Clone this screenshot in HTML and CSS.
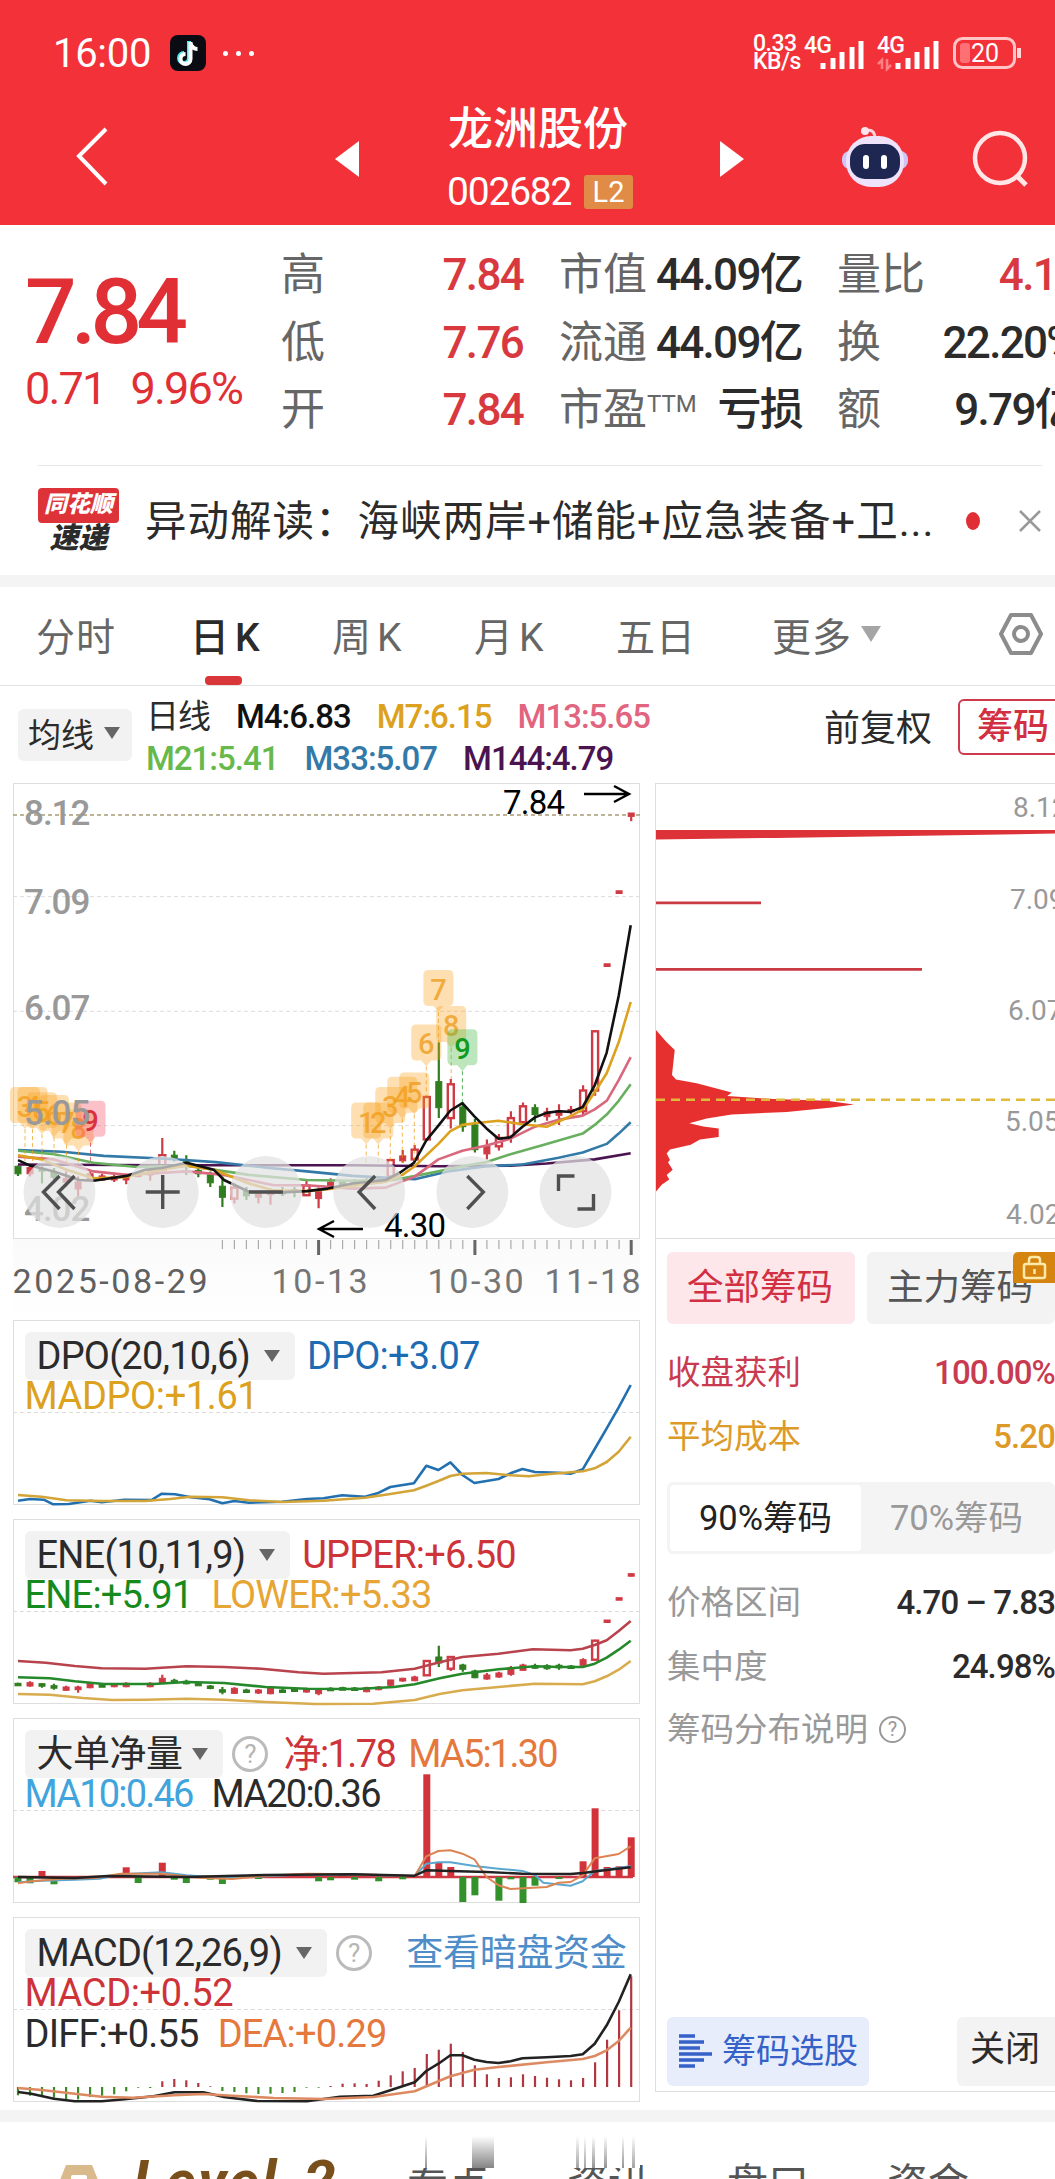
FILE: index.html
```html
<!DOCTYPE html>
<html lang="zh-CN">
<head>
  <meta charset="UTF-8">
  <meta name="viewport" content="width=device-width, initial-scale=1.0">
  <title>龙洲股份 002682</title>
  <link rel="stylesheet" href="styles.css">
</head>
<body>
  <header class="header">
    <div class="status-bar">
      <span class="clock">16:00</span>
      <svg class="app-icon" width="36" height="36" viewBox="0 0 36 36">
        <rect width="36" height="36" rx="8" fill="#0b0b14"/>
        <path d="M19 6v17a5 5 0 1 1-5-5" fill="none" stroke="#4de8f0" stroke-width="4"/>
        <path d="M20.500 7v17a5 5 0 1 1-5-5M20.500 8c1 4 4 6 7 6" fill="none" stroke="#fff" stroke-width="4"/>
      </svg>
      <span class="more-dots"><i></i><i></i><i></i></span>
      <div class="signals">
        <span class="speed">0.33<br>KB/s</span>
        <svg width="60" height="38" viewBox="0 0 60 38">
          <text x="0" y="19" class="net">4G</text>
          <path d="M19 35v-6M29 35v-11M38 35v-17M48 35v-22M57 35v-28" stroke="#fff" stroke-width="5"/>
        </svg>
        <svg width="62" height="38" viewBox="0 0 62 38">
          <text x="1" y="19" class="net">4G</text>
          <path d="M6 35v-9l-4 4M11 25v10l4-4" stroke="#ff8084" stroke-width="2.500" fill="none"/>
          <path d="M22 35v-6M32 35v-11M41 35v-17M51 35v-22M60 35v-28" stroke="#fff" stroke-width="5"/>
        </svg>
        <svg class="battery" width="70" height="32" viewBox="0 0 70 32">
          <rect x="1.500" y="1.500" width="60" height="29" rx="8" fill="none" stroke="#ffc4c6" stroke-width="3"/>
          <rect x="7" y="6" width="10" height="20" rx="3" fill="#ff7074"/>
          <path d="M66 11v10" stroke="#ffd8d9" stroke-width="4"/>
          <text x="18" y="25" class="battery-text">20</text>
        </svg>
      </div>
    </div>
    <div class="title-bar">
      <svg class="back" width="34" height="60" viewBox="0 0 34 60"><path d="M31 2 4 29l27 28" fill="none" stroke="#fff" stroke-width="4"/></svg>
      <svg class="prev" width="24" height="36" viewBox="0 0 24 36"><path d="M24 0v36L0 18z" fill="#fff"/></svg>
      <div class="stock">
        <h1>龙洲股份</h1>
        <div class="code-row"><span class="code">002682</span><span class="level">L2</span></div>
      </div>
      <svg class="next" width="24" height="36" viewBox="0 0 24 36"><path d="M0 0v36l24-18z" fill="#fff"/></svg>
      <svg class="robot" width="68" height="64" viewBox="0 0 68 64">
        <path d="M24 5c6-2 10 0 10 8" fill="none" stroke="#fbd3df" stroke-width="3"/>
        <circle cx="24" cy="5" r="4" fill="#fde4ee"/>
        <rect x="1" y="25" width="66" height="18" rx="8" fill="#cfc6f5"/>
        <rect x="5" y="10" width="58" height="51" rx="25" fill="#efe2fb"/>
        <rect x="9" y="18" width="50" height="35" rx="15" fill="#1e2751"/>
        <path d="M25 32v8M43 32v8" stroke="#fff" stroke-width="6" stroke-linecap="round"/>
      </svg>
      <svg class="search" width="58" height="58" viewBox="0 0 58 58"><circle cx="28" cy="28" r="25" fill="none" stroke="#ffe6e7" stroke-width="4.500"/><path d="m45 46 9 9" stroke="#ffe6e7" stroke-width="5"/></svg>
    </div>
  </header>

  <section class="quote">
    <div class="price">
      <div class="last">7.84</div>
      <div class="change"><span>0.71</span><span>9.96%</span></div>
    </div>
    <dl class="stats col-a">
      <div><dt>高</dt><dd class="up">7.84</dd></div>
      <div><dt>低</dt><dd class="up">7.76</dd></div>
      <div><dt>开</dt><dd class="up">7.84</dd></div>
    </dl>
    <dl class="stats col-b">
      <div><dt>市值</dt><dd>44.09亿</dd></div>
      <div><dt>流通</dt><dd>44.09亿</dd></div>
      <div><dt>市盈<sup>TTM</sup></dt><dd>亏损</dd></div>
    </dl>
    <dl class="stats col-c">
      <div><dt>量比</dt><dd class="up ratio">4.1</dd></div>
      <div><dt>换</dt><dd>22.20%</dd></div>
      <div><dt>额</dt><dd>9.79亿</dd></div>
    </dl>
  </section>

  <section class="news">
    <div class="news-logo"><b>同花顺</b><em>速递</em></div>
    <p>异动解读：海峡两岸+储能+应急装备+卫...</p>
    <i class="red-dot"></i>
    <svg width="24" height="24" viewBox="0 0 24 24"><path d="m2 2 20 20M22 2 2 22" stroke="#999" stroke-width="2.500"/></svg>
  </section>

  <nav class="tabs">
    <a>分时</a>
    <a class="active">日<span>K</span></a>
    <a>周<span>K</span></a>
    <a>月<span>K</span></a>
    <a>五日</a>
    <a class="more">更多<i class="caret"></i></a>
    <svg width="46" height="44" viewBox="0 0 46 44"><path d="M13 3h20l10 19-10 19H13L3 22z" fill="none" stroke="#8c8c8c" stroke-width="4" stroke-linejoin="round"/><circle cx="23" cy="22" r="7" fill="none" stroke="#8c8c8c" stroke-width="4"/></svg>
  </nav>

  <section class="ma-bar">
    <span class="picker ma-picker">均线<i class="caret"></i></span>
    <div class="ma-list">
      <div class="ma-row"><b>日线</b><span class="c-black">M4:6.83</span><span class="c-gold">M7:6.15</span><span class="c-pink">M13:5.65</span></div>
      <div class="ma-row"><span class="c-green">M21:5.41</span><span class="c-blue">M33:5.07</span><span class="c-purple">M144:4.79</span></div>
    </div>
    <span class="adjust">前复权</span>
    <span class="chip-toggle">筹码</span>
  </section>

  <main class="board">
    <div class="charts">
      <div class="kline"><svg id="kline" width="627" height="456"></svg></div>
      <div class="dates">
        <svg id="ticks" width="627" height="16"></svg>
        <div class="date-row"><span>2025-08-29</span><span>10-13</span><span>10-30</span><span>11-18</span></div>
      </div>

      <div class="indicator">
        <svg id="dpo" width="627" height="185"></svg>
        <div class="legend">
          <div class="legend-row"><span class="picker">DPO(20,10,6)<i class="caret"></i></span><span class="c-dpo">DPO:+3.07</span></div>
          <div class="legend-row"><span class="c-gold">MADPO:+1.61</span></div>
        </div>
      </div>

      <div class="indicator">
        <svg id="ene" width="627" height="185"></svg>
        <div class="legend">
          <div class="legend-row"><span class="picker">ENE(10,11,9)<i class="caret"></i></span><span class="c-red">UPPER:+6.50</span></div>
          <div class="legend-row"><span class="c-deepgreen">ENE:+5.91</span><span class="c-amber">LOWER:+5.33</span></div>
        </div>
      </div>

      <div class="indicator">
        <svg id="flow" width="627" height="185"></svg>
        <div class="legend flow-legend">
          <div class="legend-row"><span class="picker cn">大单净量<i class="caret"></i></span><span class="help">?</span><span class="c-red net-val">净:1.78</span><span class="c-orange">MA5:1.30</span></div>
          <div class="legend-row"><span class="c-sky">MA10:0.46</span><span class="c-dark">MA20:0.36</span></div>
        </div>
      </div>

      <div class="indicator">
        <svg id="macd" width="627" height="185"></svg>
        <div class="legend">
          <div class="legend-row"><span class="picker">MACD(12,26,9)<i class="caret"></i></span><span class="help">?</span><a class="dark-link">查看暗盘资金</a></div>
          <div class="legend-row"><span class="c-red">MACD:+0.52</span></div>
          <div class="legend-row"><span class="c-dark">DIFF:+0.55</span><span class="c-orange">DEA:+0.29</span></div>
        </div>
      </div>
    </div>

    <aside class="chips">
      <svg id="chips" width="398" height="455"></svg>
      <div class="chip-tabs">
        <span class="on">全部筹码</span>
        <span>主力筹码
          <svg class="lock" width="42" height="31" viewBox="0 0 42 31"><path d="M6 0h36v31H0V6q0-6 6-6z" fill="#d5850f"/><rect x="11" y="12" width="21" height="14" rx="2" fill="none" stroke="#ffe9a8" stroke-width="2.500"/><path d="M16 12V8q0-3 3-3h5q3 0 3 3v4M21.500 17v5" fill="none" stroke="#ffe9a8" stroke-width="2.500"/></svg>
        </span>
      </div>
      <div class="chip-row profit"><span>收盘获利</span><b>100.00%</b></div>
      <div class="chip-row cost"><span>平均成本</span><b>5.20</b></div>
      <div class="segment"><span class="on">90%筹码</span><span>70%筹码</span></div>
      <div class="chip-row"><span>价格区间</span><b>4.70 – 7.83</b></div>
      <div class="chip-row"><span>集中度</span><b>24.98%</b></div>
      <div class="chip-row note"><span>筹码分布说明</span><span class="help small">?</span></div>
      <div class="chip-actions">
        <span class="pick"><svg width="34" height="34" viewBox="0 0 34 34"><path d="M0 2h16M0 8h25M0 14h21M0 20h33M0 26h25M0 32h16" stroke="#3561c9" stroke-width="3.600"/></svg>筹码选股</span>
        <span class="close">关闭</span>
      </div>
    </aside>
  </main>

  <footer class="bottom-tabs">
    <svg class="medal" width="42" height="30" viewBox="0 0 42 30"><path d="M8 0h26l8 20v10H0V20z" fill="#d9ba8c"/><rect x="13" y="10" width="16" height="5" rx="2" fill="#fff"/></svg>
    <span class="level2">Level-2</span>
    <span>看点</span>
    <span>资讯</span>
    <span>盘口</span>
    <span>资金</span>
    <div class="streaks"></div>
  </footer>

  <script src="charts.js"></script>
</body>
</html>
```
FILE: styles.css
```css
* {
  box-sizing: border-box;
}

body {
  margin: 0;
  width: 1055px;
  height: 2179px;
  overflow: hidden;
  background: #fff;
  color: #2b2b2b;
  font-family: Roboto, "Noto Sans CJK SC", sans-serif;
}

svg {
  display: block;
  flex: none;
  overflow: visible;
}

i {
  display: inline-block;
}

/* header */
.header {
  height: 225px;
  background: #f23138;
  color: #fff;
}

.status-bar {
  display: flex;
  align-items: center;
  height: 106px;
  padding: 0 32px 0 53px;
}

.clock {
  width: 117px;
  font-size: 40px;
  letter-spacing: -0.3px;
}

.more-dots {
  display: flex;
  gap: 8px;
  margin-left: 17px;
}

.more-dots i {
  width: 5px;
  height: 5px;
  border-radius: 50%;
  background: #fff;
}

.signals {
  display: flex;
  align-items: center;
  margin-left: auto;
}

.speed {
  width: 51px;
  font-size: 23px;
  font-weight: 500;
  line-height: 18px;
  letter-spacing: -0.5px;
  white-space: nowrap;
}

.net {
  font-size: 23px;
  font-weight: 500;
  letter-spacing: -0.8px;
  fill: #fff;
}

.signals svg + svg {
  margin-left: 12px;
}

.signals .battery {
  margin-left: 15px;
}

.battery-text {
  font-size: 25px;
  fill: #fff;
}

.title-bar {
  display: flex;
  height: 119px;
  padding-left: 75px;
}

.back {
  margin-top: 21px;
}

.prev {
  margin: 35px 0 0 226px;
}

.stock {
  width: 188px;
  margin-left: 89px;
}

.stock h1 {
  margin: 0;
  padding-top: 1px;
  font-size: 45px;
  font-weight: 500;
  line-height: 46px;
  white-space: nowrap;
}

.code-row {
  display: flex;
  align-items: center;
  margin: 21px 0 0 -1px;
}

.code {
  width: 137px;
  font-size: 39px;
  line-height: 36px;
  letter-spacing: -1.2px;
}

.level {
  width: 49px;
  height: 34px;
  border-radius: 3px;
  background: #e08c46;
  font-size: 29px;
  line-height: 35px;
  text-align: center;
}

.next {
  margin: 35px 0 0 84px;
}

.robot {
  margin: 20px 0 0 97px;
}

.search {
  margin: 24px 0 0 63px;
}

/* quote */
.quote {
  display: flex;
  height: 240px;
  padding: 17px 0 0 25px;
}

.price {
  flex: none;
  width: 256px;
  color: #e03036;
}

.last {
  height: 104px;
  margin-top: 18px;
  font-size: 91px;
  font-weight: 500;
  line-height: 104px;
  letter-spacing: -5.8px;
}

.change {
  display: flex;
  gap: 25px;
  font-size: 45px;
  line-height: 50px;
  letter-spacing: -1.8px;
}

.stats {
  flex: none;
  margin: 0;
}

.stats div {
  display: flex;
  justify-content: space-between;
  height: 67.5px;
  line-height: 67.5px;
  white-space: nowrap;
}

.stats dt {
  font-size: 44px;
  color: #666;
}

.stats sup {
  font-size: 24px;
  line-height: 0;
  vertical-align: 13px;
}

.stats dd {
  margin: 0;
  font-size: 44px;
  font-weight: 500;
  letter-spacing: -1.7px;
}

.stats .up {
  color: #d8393f;
}

.col-a {
  width: 242px;
}

.col-b {
  width: 243px;
  margin-left: 36px;
}

.col-c {
  width: 240px;
  margin-left: 35px;
}

.stats .ratio {
  padding-right: 21px;
}

/* news */
.news {
  display: flex;
  align-items: center;
  height: 110px;
  margin: 0 13px 0 38px;
  border-top: 1px solid #e8e8e8;
}

.news-logo {
  flex: none;
  width: 81px;
  margin-right: 26px;
  text-align: center;
  font-style: italic;
  line-height: 31px;
}

.news-logo b {
  display: block;
  height: 35px;
  padding-top: 1px;
  border-radius: 4px;
  background: #dc3238;
  color: #fff;
  font-size: 23px;
  font-weight: 900;
}

.news-logo em {
  display: block;
  font-size: 29px;
  font-weight: 900;
}

.news p {
  flex: none;
  width: 821px;
  margin: -6px 0 0;
  font-size: 41.5px;
  letter-spacing: 1px;
  white-space: nowrap;
}

.red-dot {
  width: 18px;
  height: 18px;
  margin-right: 38px;
  border-radius: 50%;
  background: #e03036;
}

/* tabs */
.tabs {
  display: flex;
  align-items: center;
  height: 111px;
  padding: 0 9px 5px 36px;
  border-top: 12px solid #f4f4f4;
  border-bottom: 1px solid #e2e2e2;
  font-size: 39px;
  color: #666;
}

.tabs a {
  position: relative;
  width: 142px;
  letter-spacing: 1px;
  white-space: nowrap;
}

.tabs a span {
  margin-left: 5px;
}

.tabs a:first-child {
  width: 154px;
}

.tabs .active {
  color: #2b2b2b;
  font-weight: 500;
}

.tabs .active::after {
  content: "";
  position: absolute;
  left: 15px;
  bottom: -23px;
  width: 37px;
  height: 9px;
  border-radius: 4px;
  background: #d9363a;
}

.tabs .more {
  display: flex;
  align-items: center;
  width: 110px;
  margin: 0 116px 0 14px;
}

.caret {
  border: 8px solid transparent;
  border-top: 12px solid #666;
  border-bottom: 0;
}

.tabs .caret {
  margin-left: 9px;
  border-width: 16px 10px 0;
  border-top-color: #a5a5a5;
}

/* moving averages */
.ma-bar {
  display: flex;
  height: 97px;
  padding-left: 18px;
}

.picker {
  display: flex;
  align-items: center;
  border-radius: 6px;
  background: #f2f2f2;
  color: #2b2b2b;
}

.ma-picker {
  flex: none;
  width: 114px;
  height: 52px;
  margin-top: 23px;
  padding: 0 0 4px 10px;
  font-size: 33px;
}

.ma-picker .caret {
  margin-left: 10px;
}

.ma-list {
  flex: none;
  width: 677px;
  padding: 10px 0 0 14px;
}

.ma-row {
  display: flex;
  gap: 26px;
  height: 42px;
  font-size: 33px;
  font-weight: 500;
  line-height: 42px;
  letter-spacing: -1px;
}

.ma-row b {
  font-weight: 400;
}

.adjust {
  flex: none;
  width: 149px;
  padding-left: 15px;
  font-size: 36px;
  line-height: 87px;
}

.chip-toggle {
  flex: none;
  width: 115px;
  height: 56px;
  margin-top: 13px;
  padding-left: 17px;
  border: 2px solid #cf3a4d;
  border-radius: 6px;
  color: #d22f43;
  font-size: 36px;
  font-weight: 500;
  line-height: 52px;
}

.c-black { color: #111; }
.c-gold { color: #dca11d; }
.c-pink { color: #e2657f; }
.c-green { color: #68b94c; }
.c-blue { color: #337aa8; }
.c-purple { color: #4b1450; }
.c-dpo { color: #1d6cb3; }
.c-red { color: #cd3339; }
.c-deepgreen { color: #168a1c; }
.c-amber { color: #e7a535; }
.c-orange { color: #e5783d; }
.c-sky { color: #41a4dc; }
.c-dark { color: #2b2b2b; }

/* charts */
.board {
  display: flex;
  height: 1327px;
  padding-left: 12.5px;
}

.charts {
  flex: none;
  width: 642.5px;
}

.kline {
  width: 627px;
  height: 456px;
}

.dates {
  width: 627px;
  height: 81px;
  background: linear-gradient(#fafafa, #fff);
}

.date-row {
  display: flex;
  padding-top: 6px;
  font-size: 34px;
  line-height: 40px;
  letter-spacing: 2.6px;
  color: #757575;
}

.date-row span {
  width: 117px;
  white-space: nowrap;
}

.date-row span:first-child {
  width: 259px;
  color: #606060;
}

.date-row span:nth-child(2) {
  width: 156px;
}

.date-row span:last-child {
  width: 95px;
}

.indicator {
  position: relative;
  width: 627px;
  height: 185px;
  margin-bottom: 14px;
}

.legend {
  position: absolute;
  inset: 12px 0 0 12px;
  font-size: 38px;
  letter-spacing: -0.8px;
}

.legend-row {
  display: flex;
  align-items: center;
  gap: 19px;
  height: 41px;
  line-height: 41px;
  white-space: nowrap;
}

.legend-row:first-child {
  gap: 12px;
  height: 48px;
  margin-bottom: -4px;
}

.legend-row:nth-child(2) > .c-gold,
.legend-row:nth-child(2) > .c-red {
  letter-spacing: -0.4px;
}

.legend-row .picker {
  height: 48px;
  padding: 0 15px 0 12px;
}

.legend-row .caret {
  margin-left: 14px;
}

.picker.cn {
  font-size: 37px;
  letter-spacing: -0.5px;
}

.picker.cn .caret {
  margin-left: 9px;
}

.flow-legend {
  letter-spacing: -1.8px;
}

.help {
  flex: none;
  width: 36px;
  height: 36px;
  margin-left: -3px;
  border: 3px solid #bbb;
  border-radius: 50%;
  color: #b5b5b5;
  font-size: 26px;
  line-height: 31px;
  text-align: center;
}

.net-val {
  margin: 0 1px 0 4px;
  letter-spacing: -1.6px;
}

.dark-link {
  margin-left: auto;
  padding-right: 13px;
  color: #4f8dc9;
  font-size: 37px;
  letter-spacing: -0.3px;
}

/* chip panel */
.chips {
  display: flex;
  flex-direction: column;
  flex: none;
  width: 400px;
  height: 1309px;
  border: 1px solid #dedede;
  border-right: 0;
  overflow: hidden;
}

.chip-tabs {
  display: flex;
  gap: 12px;
  padding: 13px 0 15px 11px;
}

.chip-tabs > span {
  position: relative;
  width: 188px;
  height: 72px;
  padding-left: 20px;
  border-radius: 6px;
  background: #f3f3f3;
  color: #555;
  font-size: 36.5px;
  line-height: 72px;
}

.chip-tabs .on {
  background: #fde7ea;
  color: #d22f43;
}

.lock {
  position: absolute;
  top: 0;
  right: 0;
}

.chip-row {
  display: flex;
  justify-content: space-between;
  height: 64px;
  padding-left: 11px;
  color: #999;
  font-size: 33.5px;
  line-height: 67px;
}

.chip-row b {
  color: #2b2b2b;
  font-size: 33px;
  font-weight: 500;
  letter-spacing: -0.9px;
}

.profit,
.chip-row.profit b {
  color: #c93a50;
}

.cost,
.chip-row.cost b {
  color: #dd9a28;
}

.segment {
  display: flex;
  height: 72px;
  margin: 15px 0 15px 11px;
  padding: 3px;
  border-radius: 6px;
  background: #f4f4f4;
  font-size: 34.5px;
  line-height: 67px;
  color: #999;
}

.segment span {
  width: 191px;
  text-align: center;
}

.segment .on {
  border-radius: 4px;
  background: #fff;
  color: #222;
}

.chip-row.note {
  justify-content: flex-start;
  align-items: center;
  gap: 11px;
}

.help.small {
  width: 27px;
  height: 27px;
  margin-left: 0;
  border-width: 2px;
  border-color: #999;
  color: #999;
  font-size: 20px;
  line-height: 23px;
}

.chip-actions {
  display: flex;
  justify-content: space-between;
  margin-top: auto;
  padding: 0 0 5px 11px;
  font-size: 34px;
  line-height: 66px;
}

.pick {
  display: flex;
  align-items: center;
  gap: 9px;
  width: 202px;
  height: 69px;
  padding: 0 0 2px 12px;
  border-radius: 6px;
  background: #e8edfb;
  color: #3561c9;
}

.close {
  width: 98px;
  height: 69px;
  padding-left: 13px;
  border-radius: 6px 0 0 6px;
  background: #f3f3f3;
  font-size: 35px;
}

/* chart text */
.axis { font-size: 35px; font-weight: 500; letter-spacing: -1px; fill: #999; }
.mark { font-size: 33px; letter-spacing: -0.8px; fill: #000; }
.chip-axis { font-size: 28px; fill: #999; }
.tag { font-size: 29px; font-weight: 500; text-anchor: middle; }

/* bottom tabs */
.bottom-tabs {
  position: relative;
  display: flex;
  height: 70px;
  padding: 32px 0 0 58px;
  border-top: 12px solid #f4f4f4;
  font-size: 41px;
  line-height: 60px;
  color: #555;
  overflow: hidden;
}

.bottom-tabs span {
  width: 160px;
  flex: none;
  white-space: nowrap;
}

.bottom-tabs .level2 {
  width: 274px;
  margin-left: 33px;
  color: #79501c;
  font-size: 58px;
  font-weight: 700;
  font-style: italic;
  line-height: 54px;
  letter-spacing: 2.4px;
}

.medal {
  margin-top: 11px;
}

.streaks {
  position: absolute;
  left: 408px;
  top: 14px;
  width: 232px;
  height: 32px;
  background:
    linear-gradient(#fff, rgba(255, 255, 255, 0.1)),
    linear-gradient(90deg, #fff 0 17px, #888 17px 19px, #fff 19px 64px, #777 64px 86px, #fff 86px 168px, #999 168px 171px, #fff 171px 176px, #999 176px 178px, #fff 178px 184px, #888 184px 187px, #fff 187px 196px, #888 196px 199px, #fff 199px 214px, #888 214px 216px, #fff 216px 224px, #999 224px 227px, #fff 227px);
}
```
FILE: charts.js
```javascript
const RED = '#cf3b44';
const GREEN = '#2f7d1f';

// helpers: each chart keeps its own plot units
function scale(x0, y0, sx, sy) {
  return {
    x: v => +((v - x0) / sx).toFixed(1),
    y: v => +((v - y0) / sy).toFixed(1)
  };
}

function line(s, pts, color, width) {
  const nums = pts.split(' ').map(p => p.split(','));
  const d = nums.map(p => s.x(p[0]) + ',' + s.y(p[1])).join(' ');
  return `<polyline points="${d}" fill="none" stroke="${color}" stroke-width="${width || 2.6}" stroke-linejoin="round"/>`;
}

function frame(w, h) {
  return `<rect x="0.5" y="0.5" width="${w - 1}" height="${h - 1}" fill="#fff" stroke="#dedede"/>`;
}

function dash(y, w, color) {
  return `<path d="M0 ${y}H${w}" stroke="${color || '#dcdcdc'}" stroke-width="${color ? 1.6 : 1}" stroke-dasharray="4 3"/>`;
}

// [index, up, high, top, bottom, low]
function candles(s, list) {
  return list.map(c => {
    const x = s.x(43 + c[0] * 29);
    const color = c[1] ? RED : GREEN;
    const top = s.y(c[3]);
    const h = Math.max(s.y(c[4]) - top, 2.5);
    const hollow = c[1] && h > 8;
    return `<path d="M${x} ${s.y(c[2])}V${top}M${x} ${top + h}V${Math.max(s.y(c[5]), top + h)}" stroke="${color}" stroke-width="2.2"/>` +
      `<rect x="${x - 3}" y="${top}" width="6" height="${h}" fill="${hollow ? '#fff' : color}" stroke="${color}" stroke-width="${hollow ? 2.4 : 1}"/>`;
  }).join('');
}

// main chart
const k = scale(31, 37, 2.412, 2.904);
const daily = [
  [0,0,1148,1150,1172,1178],[1,1,1145,1154,1172,1180],[2,0,1150,1156,1164,1200],[3,0,1155,1168,1182,1190],
  [4,1,1165,1186,1196,1210],[5,1,1180,1196,1216,1242],[6,1,1165,1172,1190,1192],[7,1,1172,1178,1190,1192],
  [8,1,1172,1180,1190,1196],[9,1,1172,1180,1190,1202],[10,1,1165,1172,1180,1182],[11,1,1155,1162,1175,1192],
  [12,1,1068,1118,1160,1162],[13,0,1105,1118,1126,1136],[14,0,1118,1136,1146,1175],[15,0,1150,1162,1172,1182],
  [16,0,1165,1175,1198,1210],[17,0,1180,1208,1240,1268],[18,1,1200,1212,1244,1258],[19,0,1210,1222,1236,1248],
  [20,1,1220,1230,1240,1258],[21,1,1215,1225,1232,1262],[22,0,1210,1220,1230,1236],[23,0,1210,1218,1226,1240],
  [24,1,1190,1206,1234,1236],[25,1,1212,1224,1244,1272],[26,1,1185,1196,1216,1218],[27,0,1190,1196,1202,1206],
  [28,0,1188,1194,1200,1204],[29,1,1185,1192,1198,1204],[30,1,1180,1188,1198,1200],[31,1,1130,1132,1180,1182],
  [32,1,1103,1120,1134,1140],[33,1,1088,1102,1130,1138],[34,1,945,949,1072,1075],[35,0,790,904,980,1010],
  [36,1,897,912,1010,1040],[37,0,965,978,1035,1050],[38,0,1012,1030,1102,1110],[39,1,1072,1092,1114,1130],
  [40,1,1056,1068,1092,1104],[41,1,990,1010,1064,1082],[42,1,965,976,1022,1030],[43,0,970,980,1000,1022],
  [44,1,980,992,1006,1018],[45,1,970,988,1002,1030],[46,1,975,985,992,1000],[47,1,915,930,990,1002],
  [48,1,755,758,930,945],[49,1,562,562,570,570],[50,1,350,350,358,358],[51,1,124,124,134,148]
];
// [x, top, label, style]
const tags = [
  [60,920,'3'],[78,920,'4'],[101,935,'5'],[130,943,'6'],[160,965,'7'],[189,985,'8'],[218,960,'9','r'],
  [883,965,'1'],[912,965,'2'],[941,920,'3'],[970,890,'4'],[999,878,'5'],
  [1028,738,'6'],[1057,580,'7'],[1088,685,'8'],[1115,752,'9','g']
];
const tagColors = { r: ['#f5465d', '#d93040'], g: ['#3fb53f', '#119a20'], o: ['#f8a01c', '#ee9a15'] };
const tagEnds = { 1028: 945, 1057: 790, 1088: 897, 1115: 965 };

let main = frame(627, 456);
main += dash(k.y(367), 627) + dash(k.y(700), 627) + dash(k.y(1032), 627) + dash(k.y(130), 627, '#a99b74');
main += candles(k, daily);
main += line(k, '43,1145 400,1147 850,1147 1060,1150 1231,1148 1318,1142 1434,1130 1521,1112', '#4b1450');
main += line(k, '43,1103 150,1108 250,1120 400,1128 520,1138 650,1155 740,1165 850,1178 1000,1188 1080,1165 1173,1150 1260,1145 1347,1125 1405,1110 1463,1085 1492,1055 1521,1022', '#337aa8');
main += line(k, '43,1105 130,1115 225,1140 330,1152 450,1148 600,1175 740,1190 850,1192 950,1190 1057,1165 1115,1150 1173,1138 1231,1115 1318,1085 1405,1055 1434,1030 1463,1000 1492,960 1521,912', '#68b060');
main += line(k, '43,1122 130,1130 225,1165 305,1175 450,1165 540,1175 660,1205 740,1205 850,1215 930,1212 1000,1180 1057,1130 1115,1105 1173,1090 1231,1070 1290,1035 1347,1015 1405,1003 1434,985 1463,960 1492,900 1521,833', '#d9687d');
main += line(k, '43,1118 100,1130 160,1160 225,1185 300,1182 390,1160 450,1148 515,1160 600,1200 660,1220 740,1222 800,1215 930,1195 970,1175 1000,1150 1057,1085 1086,1048 1115,1030 1144,1025 1202,1018 1260,1028 1318,1035 1376,1005 1405,985 1434,935 1463,880 1492,790 1521,673', '#dca11d');
main += line(k, '43,1132 72,1148 130,1165 190,1190 225,1192 305,1178 350,1160 390,1155 450,1140 515,1160 540,1190 600,1224 680,1226 740,1222 790,1215 850,1200 930,1190 965,1168 998,1140 1028,1075 1057,1032 1086,988 1115,967 1144,1005 1173,1040 1202,1070 1231,1066 1260,1035 1290,1008 1318,995 1347,990 1376,992 1405,978 1434,915 1463,820 1492,655 1521,450', '#111');

tags.forEach(t => {
  const x = k.x(t[0]);
  const y = k.y(t[1]);
  const c = tagColors[t[3] || 'o'];
  const end = k.y(tagEnds[t[0]] || 1140);
  main += `<path d="M${x} ${y + 42}V${end}" stroke="${c[1]}" stroke-dasharray="4 3" opacity=".7"/>` +
    `<path d="M${x - 10} ${y}h20q5 0 5 5v26q0 5-5 5h-5l-5 6-5-6h-5q-5 0-5-5v-26q0-5 5-5z" fill="${c[0]}" fill-opacity=".34"/>` +
    `<text class="tag" x="${x}" y="${y + 30}" fill="${c[1]}" fill-opacity="${t[3] ? 1 : 0.75}">${t[2]}</text>`;
});

[['8.12', 42], ['7.09', 131], ['6.07', 237], ['5.05', 342], ['4.02', 438]].forEach(a => {
  main += `<text class="axis" x="11" y="${a[1]}">${a[0]}</text>`;
});
main += '<text class="mark" x="490" y="31">7.84</text><path d="M571 11h44M601 3l15 8-15 8" fill="none" stroke="#000" stroke-width="2.4"/>';
main += '<text class="mark" x="371" y="454">4.30</text><path d="M350 446h-44M321 438l-15 8 15 8" fill="none" stroke="#000" stroke-width="2.4"/>';

// floating buttons
const icons = [
  'M0-16-16 0 0 17M15-16-1 0 15 17', 'M-17 0H17M0-17V17', 'M-17 0H17',
  'M6-16-10 0 6 17', 'M-5-16 11 0-5 17', 'M-17-1V-16H-1M18 2V17H2'
];
icons.forEach((d, i) => {
  main += `<g transform="translate(${46.5 + i * 103.2} 409)"><circle r="36" fill="#e2e2e2" fill-opacity=".72"/>` +
    `<path d="${d}" fill="none" stroke="#505050" stroke-width="3.4"/></g>`;
});
document.getElementById('kline').innerHTML = main;

let marks = '';
for (let i = 17; i <= 51; i++) {
  const big = i === 25 || i === 38 || i === 51;
  marks += `<path d="M${k.x(43 + i * 29)} 1V${big ? 16 : 10}" stroke="${big ? '#666' : '#aaa'}" stroke-width="${big ? 3 : 1.2}"/>`;
}
document.getElementById('ticks').innerHTML = marks;

// DPO
const d = scale(31, 30, 2.412, 3);
document.getElementById('dpo').innerHTML = frame(627, 185) + dash(92.5, 627) +
  line(d, '43,572 72,567 105,569 128,583 165,582 218,572 245,577 300,569 365,570 390,551 422,553 460,562 505,568 536,580 565,573 600,578 680,575 740,567 780,565 825,556 880,560 910,550 941,531 998,520 1028,467 1057,480 1086,457 1115,495 1144,519 1202,507 1231,490 1260,477 1290,486 1347,488 1376,491 1405,478 1434,417 1463,355 1492,292 1521,225', '#2270b0') +
  line(d, '43,555 100,560 160,571 245,573 350,573 410,567 460,560 536,562 600,571 680,576 780,572 880,563 941,552 998,541 1028,527 1057,513 1086,498 1115,491 1173,489 1231,496 1275,499 1318,493 1405,484 1434,475 1463,456 1492,425 1521,380', '#d3a437');

// ENE
const e = scale(31, 626, 2.412, 3);
const small = [
  [0,0,1117,1119,1124,1126],[1,1,1113,1117,1127,1129],[2,0,1119,1120,1122,1132],[3,0,1120,1126,1132,1138],[4,1,1126,1130,1140,1142],
  [5,1,1126,1130,1138,1147],[6,1,1115,1118,1132,1134],[7,0,1120,1123,1128,1130],[8,1,1118,1120,1129,1131],[9,1,1116,1119,1129,1131],
  [11,1,1116,1119,1129,1131],[12,1,1093,1104,1118,1120],[13,0,1105,1110,1114,1118],[14,0,1108,1113,1117,1122],[15,0,1115,1119,1122,1126],
  [16,0,1124,1127,1131,1137],[17,0,1130,1138,1143,1152],[18,1,1131,1134,1149,1151],[19,0,1135,1139,1143,1147],[20,1,1136,1139,1148,1151],
  [21,1,1129,1132,1150,1152],[22,0,1136,1139,1142,1144],[23,0,1133,1136,1142,1145],[24,1,1132,1135,1145,1147],[25,1,1134,1138,1150,1155],
  [26,0,1131,1134,1140,1142],[27,0,1129,1132,1136,1140],[28,0,1130,1133,1137,1140],[29,1,1129,1132,1144,1146],[30,1,1127,1130,1138,1140],
  [31,1,1108,1109,1125,1130],[32,1,1102,1104,1112,1114],[33,1,1096,1100,1111,1113],[34,1,1049,1052,1095,1096],[35,0,1006,1040,1058,1070],
  [36,1,1038,1040,1075,1082],[37,0,1060,1064,1077,1084],[38,0,1078,1082,1102,1104],[39,1,1088,1094,1106,1108],[40,1,1084,1088,1100,1102],
  [41,1,1067,1072,1092,1096],[42,1,1060,1064,1080,1082],[43,0,1060,1066,1071,1076],[44,0,1062,1066,1075,1078],[45,0,1060,1065,1072,1078],
  [46,0,1064,1067,1072,1076],[47,1,1044,1048,1065,1068],[48,1,988,991,1048,1050],[49,1,929,929,934,934],[50,1,862,862,868,868],[51,1,789,790,796,799]
];
document.getElementById('ene').innerHTML = frame(627, 185) + dash(92.5, 627) + candles(e, small) +
  line(e, '43,1052 110,1057 180,1067 245,1074 350,1075 450,1068 540,1070 630,1075 720,1086 780,1090 920,1086 1000,1075 1060,1056 1115,1040 1202,1030 1285,1017 1376,1020 1405,1015 1434,1004 1463,990 1492,962 1521,932', '#b8434c') +
  line(e, '43,1101 120,1104 180,1113 250,1121 370,1121 450,1115 540,1118 640,1130 740,1135 860,1136 950,1130 1000,1122 1060,1104 1115,1090 1202,1077 1290,1068 1347,1070 1405,1070 1434,1060 1463,1042 1492,1018 1521,991', '#25882a') +
  line(e, '43,1151 120,1153 200,1163 270,1169 350,1168 450,1165 540,1168 640,1175 760,1181 900,1180 1000,1169 1060,1151 1115,1140 1202,1130 1290,1120 1405,1122 1434,1113 1463,1098 1492,1078 1521,1052', '#d8ab4e');

// net big orders
const f = scale(31, 53, 2.412, 3);
const flowBars = [
  [2,512],[9,501],[12,487],[34,222],[35,488],[36,500],[47,483],[48,324],[49,500],[50,498],[51,411],[27,518],
  [0,546],[1,549],[3,552],[10,548],[13,538],[14,548],[17,551],[16,538],[20,536],[25,543],[26,540],[28,538],[30,543],[32,537],
  [37,605],[38,585],[40,601],[41,537],[42,608],[43,556],[45,536]
];
let flow = frame(627, 185) + dash(92.5, 627) + `<path d="M0 ${f.y(530)}H620" stroke="${RED}" stroke-width="2.5"/>`;
flowBars.forEach(b => {
  const top = Math.min(f.y(b[1]), f.y(530));
  flow += `<rect x="${f.x(43 + b[0] * 29) - 3.5}" y="${top}" width="7" height="${Math.abs(f.y(b[1]) - f.y(530))}" fill="${b[1] < 530 ? '#d2333a' : '#32912a'}"/>`;
});
flow += line(f, '43,546 100,541 180,538 240,535 290,522 390,516 450,525 540,533 640,528 740,522 850,523 1000,527 1028,490 1057,486 1086,486 1144,497 1202,505 1260,512 1290,524 1310,547 1376,556 1405,543 1434,512 1521,498', '#5ba7cf', 2) +
  line(f, '43,549 75,543 150,535 230,533 290,520 390,520 480,532 560,536 640,526 740,520 850,522 1000,527 1028,468 1057,452 1086,450 1115,460 1144,477 1173,530 1202,555 1231,566 1318,560 1347,547 1376,545 1405,525 1434,474 1492,461 1521,438', '#dc8452', 2) +
  line(f, '43,530 180,533 260,527 450,530 640,524 850,522 1000,526 1028,510 1086,512 1173,515 1260,520 1376,521 1405,518 1463,509 1521,501', '#222', 2.4);
document.getElementById('flow').innerHTML = flow;

// MACD
const m = scale(31, 650, 2.412, 3);
const hist = [
  1185,1186,1188,1192,1196,1197,1190,1186,1182,1173,1162,1163,1143,1136,1140,1148,1158,1172,1175,1179,1181,1180,1178,1175,1162,1162,
  1157,1150,1149,1151,1141,1125,1113,1103,1061,1048,1030,1055,1095,1122,1133,1131,1122,1127,1132,1137,1140,1133,1086,1018,930,828
];
let macd = frame(627, 185) + dash(92.5, 627);
hist.forEach((v, i) => {
  macd += `<path d="M${m.x(43 + i * 29)} ${m.y(1160)}V${m.y(v)}" stroke="${v < 1160 ? '#b0373f' : '#3c8a25'}" stroke-width="2.2"/>`;
});
macd += line(m, '43,1175 75,1180 130,1195 180,1203 245,1203 300,1197 370,1188 420,1176 490,1176 540,1190 620,1202 740,1203 820,1189 900,1186 941,1170 1000,1146 1028,1112 1057,1090 1086,1065 1115,1065 1144,1078 1173,1085 1202,1088 1231,1083 1260,1074 1318,1071 1376,1067 1405,1062 1434,1030 1463,975 1492,905 1521,822', '#222') +
  line(m, '43,1163 100,1169 180,1180 245,1189 320,1192 420,1185 490,1181 560,1186 660,1193 780,1196 900,1190 1000,1173 1057,1143 1086,1128 1144,1108 1202,1100 1318,1086 1405,1076 1434,1067 1463,1050 1492,1022 1521,982', '#dd8a62');
document.getElementById('macd').innerHTML = macd;

// chip distribution
const c = scale(48, 35, 3, 2.8);
const area = '48,724 78,756 104,780 96,850 108,862 170,873 275,899 262,909 400,917 560,922 642,932 575,941 500,948 440,953 275,960 200,972 148,985 190,994 236,1000 236,1023 180,1030 152,1045 90,1058 80,1070 90,1088 84,1094 98,1115 80,1130 88,1142 66,1156 48,1176'
  .split(' ').map(p => p.split(',')).map(p => c.x(p[0]) + ',' + c.y(p[1])).join(' ');
let chips = `<polygon points="0,${c.y(164)} 399,${c.y(164)} 399,${c.y(174)} 120,${c.y(186)} 0,${c.y(190)}" fill="#dc3238"/>` +
  `<path d="M0 ${c.y(368)}H105M0 ${c.y(554)}H266" stroke="#c93a42" stroke-width="2.6"/>` +
  `<polygon points="${area}" fill="#e6302f"/>` +
  `<path d="M0 ${c.y(919)}H399" stroke="#e0b93d" stroke-width="2.4" stroke-dasharray="9 6"/>` +
  '<path d="M0 454.500H399" stroke="#dedede"/>';
[['8.12', 357, 33], ['7.09', 354, 125], ['6.07', 352, 236], ['5.05', 349, 347], ['4.02', 350, 440]].forEach(a => {
  chips += `<text class="chip-axis" x="${a[1]}" y="${a[2]}">${a[0]}</text>`;
});
document.getElementById('chips').innerHTML = chips;
```
